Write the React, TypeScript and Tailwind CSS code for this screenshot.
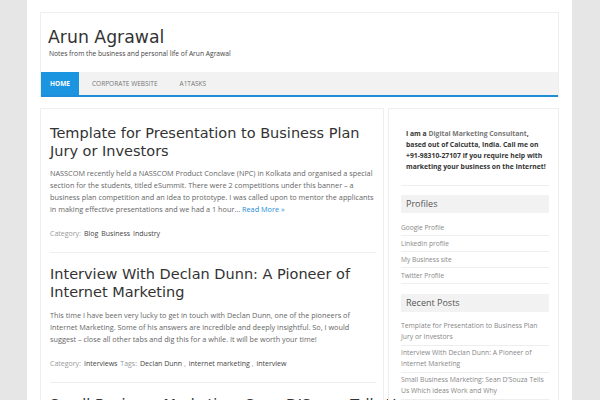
import React from 'react';

const body = { fontFamily: '"Open Sans", "Noto Sans", sans-serif' };
const head = { fontFamily: '"DejaVu Sans", sans-serif' };

const profiles = ['Google Profile', 'LinkedIn profile', 'My Business site', 'Twitter Profile'];
const recent = [
  ['Template for Presentation to Business Plan', 'Jury or Investors'],
  ['Interview With Declan Dunn: A Pioneer of', 'Internet Marketing'],
  ['Small Business Marketing: Sean D\u2019Souza Tells', 'Us Which ideas Work and Why'],
];

function WidgetTitle({ children }: { children: React.ReactNode }) {
  return (
    <div className="h-[18px] bg-[#f2f2f2] pl-[5px] text-[9px] leading-[18px] text-[#555]">
      {children}
    </div>
  );
}

function Meta({ children }: { children: React.ReactNode }) {
  return <span className="ml-[3px] text-[#444]">{children}</span>;
}

export default function App() {
  return (
    <div className="h-[400px] overflow-hidden bg-[#e6e6e6]" style={body}>
      <div className="ml-[27px] h-[400px] w-[545px] bg-white px-[13px] pt-[12px]">
        {/* header */}
        <header className="border border-b-0 border-[#eee]">
          <div className="h-[59px] pl-[7px] pt-[14px]">
            <div className="text-[17.3px] leading-[21px] text-[#333]" style={head}>
              Arun Agrawal
            </div>
            <div className="mt-[1px] pl-[1px] text-[6.7px] leading-[10px] text-[#444]">
              Notes from the business and personal life of Arun Agrawal
            </div>
          </div>
          <nav className="flex h-[25px] border-b-2 border-[#1e8cd7] bg-[#f2f2f2] text-[6.5px]">
            <a className="flex w-[38px] items-center justify-center bg-[#1b95e0] font-bold text-white">HOME</a>
            <a className="flex items-center px-[13px] text-[#777]">CORPORATE WEBSITE</a>
            <a className="flex items-center px-[9px] text-[#777]">A1TASKS</a>
          </nav>
        </header>

        <div className="mt-[11px] flex gap-[4px]">
          {/* main column */}
          <main className="h-[300px] w-[344px] border border-b-0 border-[#eee] pl-[9px] pr-[4px] pt-[15px]">
            <article>
              <h2 className="text-[14.5px] leading-[18px] text-[#333]" style={head}>
                Template for Presentation to Business Plan<br />Jury or Investors
              </h2>
              <p className="mt-[7px] whitespace-nowrap text-[7.3px] leading-[12px] text-[#666]">
                NASSCOM recently held a NASSCOM Product Conclave (NPC) in Kolkata and organised a special<br />
                section for the students, titled eSummit. There were 2 competitions under this banner &ndash; a<br />
                business plan competition and an idea to prototype. I was called upon to mentor the applicants<br />
                in making effective presentations and we had a 1 hour&hellip;{' '}
                <span className="text-[#1e8cd7]">Read More &raquo;</span>
              </p>
              <div className="mt-[13px] text-[7px] leading-[12px] text-[#999]">
                Category:<Meta>Blog</Meta>
                <Meta>Business</Meta>
                <Meta>Industry</Meta>
              </div>
            </article>
            <div className="mr-[3px] mt-[12px] border-t border-[#eee]" />
            <article className="mt-[12px]">
              <h2 className="text-[14.5px] leading-[18px] text-[#333]" style={head}>
                Interview With Declan Dunn: A Pioneer of<br />Internet Marketing
              </h2>
              <p className="mt-[8px] whitespace-nowrap text-[7.3px] leading-[12px] text-[#666]">
                This time I have been very lucky to get in touch with Declan Dunn, one of the pioneers of<br />
                Internet Marketing. Some of his answers are incredible and deeply insightful. So, I would<br />
                suggest &ndash; close all other tabs and dig this for a while. It will be worth your time!
              </p>
              <div className="mt-[13px] text-[7px] leading-[12px] text-[#999]">
                Category:<Meta>Interviews</Meta> <span className="ml-[1px]">Tags:</span>
                <Meta>Declan Dunn</Meta> ,<Meta>internet marketing</Meta> ,<Meta>interview</Meta>
              </div>
            </article>
            <div className="mr-[3px] mt-[12px] border-t border-[#eee]" />
            <h2 className="mt-[12px] whitespace-nowrap text-[14.5px] leading-[18px] text-[#333]" style={head}>
              Small Business Marketing: Sean D&rsquo;Souza Tells Us
            </h2>
          </main>

          {/* sidebar */}
          <aside className="h-[300px] w-[171px] border border-b-0 border-[#eee] pl-[12px] pr-[9px] pt-[19px]">
            <p className="whitespace-nowrap px-[5px] text-[6.8px] font-bold leading-[11px] text-[#333]">
              I am a <span className="text-[#777]">Digital Marketing Consultant</span>,<br />
              based out of Calcutta, India. Call me on<br />
              +91-98310-27107 if you require help with<br />
              marketing your business on the Internet!
            </p>
            <div className="mt-[13px] border-t border-[#eee]" />
            <div className="mt-[9px]">
              <WidgetTitle>Profiles</WidgetTitle>
              <ul className="mt-[7px]">
                {profiles.map((p) => (
                  <li key={p} className="border-b border-[#eee] text-[6.6px] leading-[15px] text-[#888]">
                    {p}
                  </li>
                ))}
              </ul>
            </div>
            <div className="mt-[10px]">
              <WidgetTitle>Recent Posts</WidgetTitle>
              <ul className="mt-[7px]">
                {recent.map(([a, b]) => (
                  <li key={a} className="whitespace-nowrap border-b border-[#eee] pb-[3px] pt-[2px] text-[6.8px] leading-[10.5px] text-[#888]">
                    {a}
                    <br />
                    {b}
                  </li>
                ))}
              </ul>
            </div>
          </aside>
        </div>
      </div>
    </div>
  );
}
